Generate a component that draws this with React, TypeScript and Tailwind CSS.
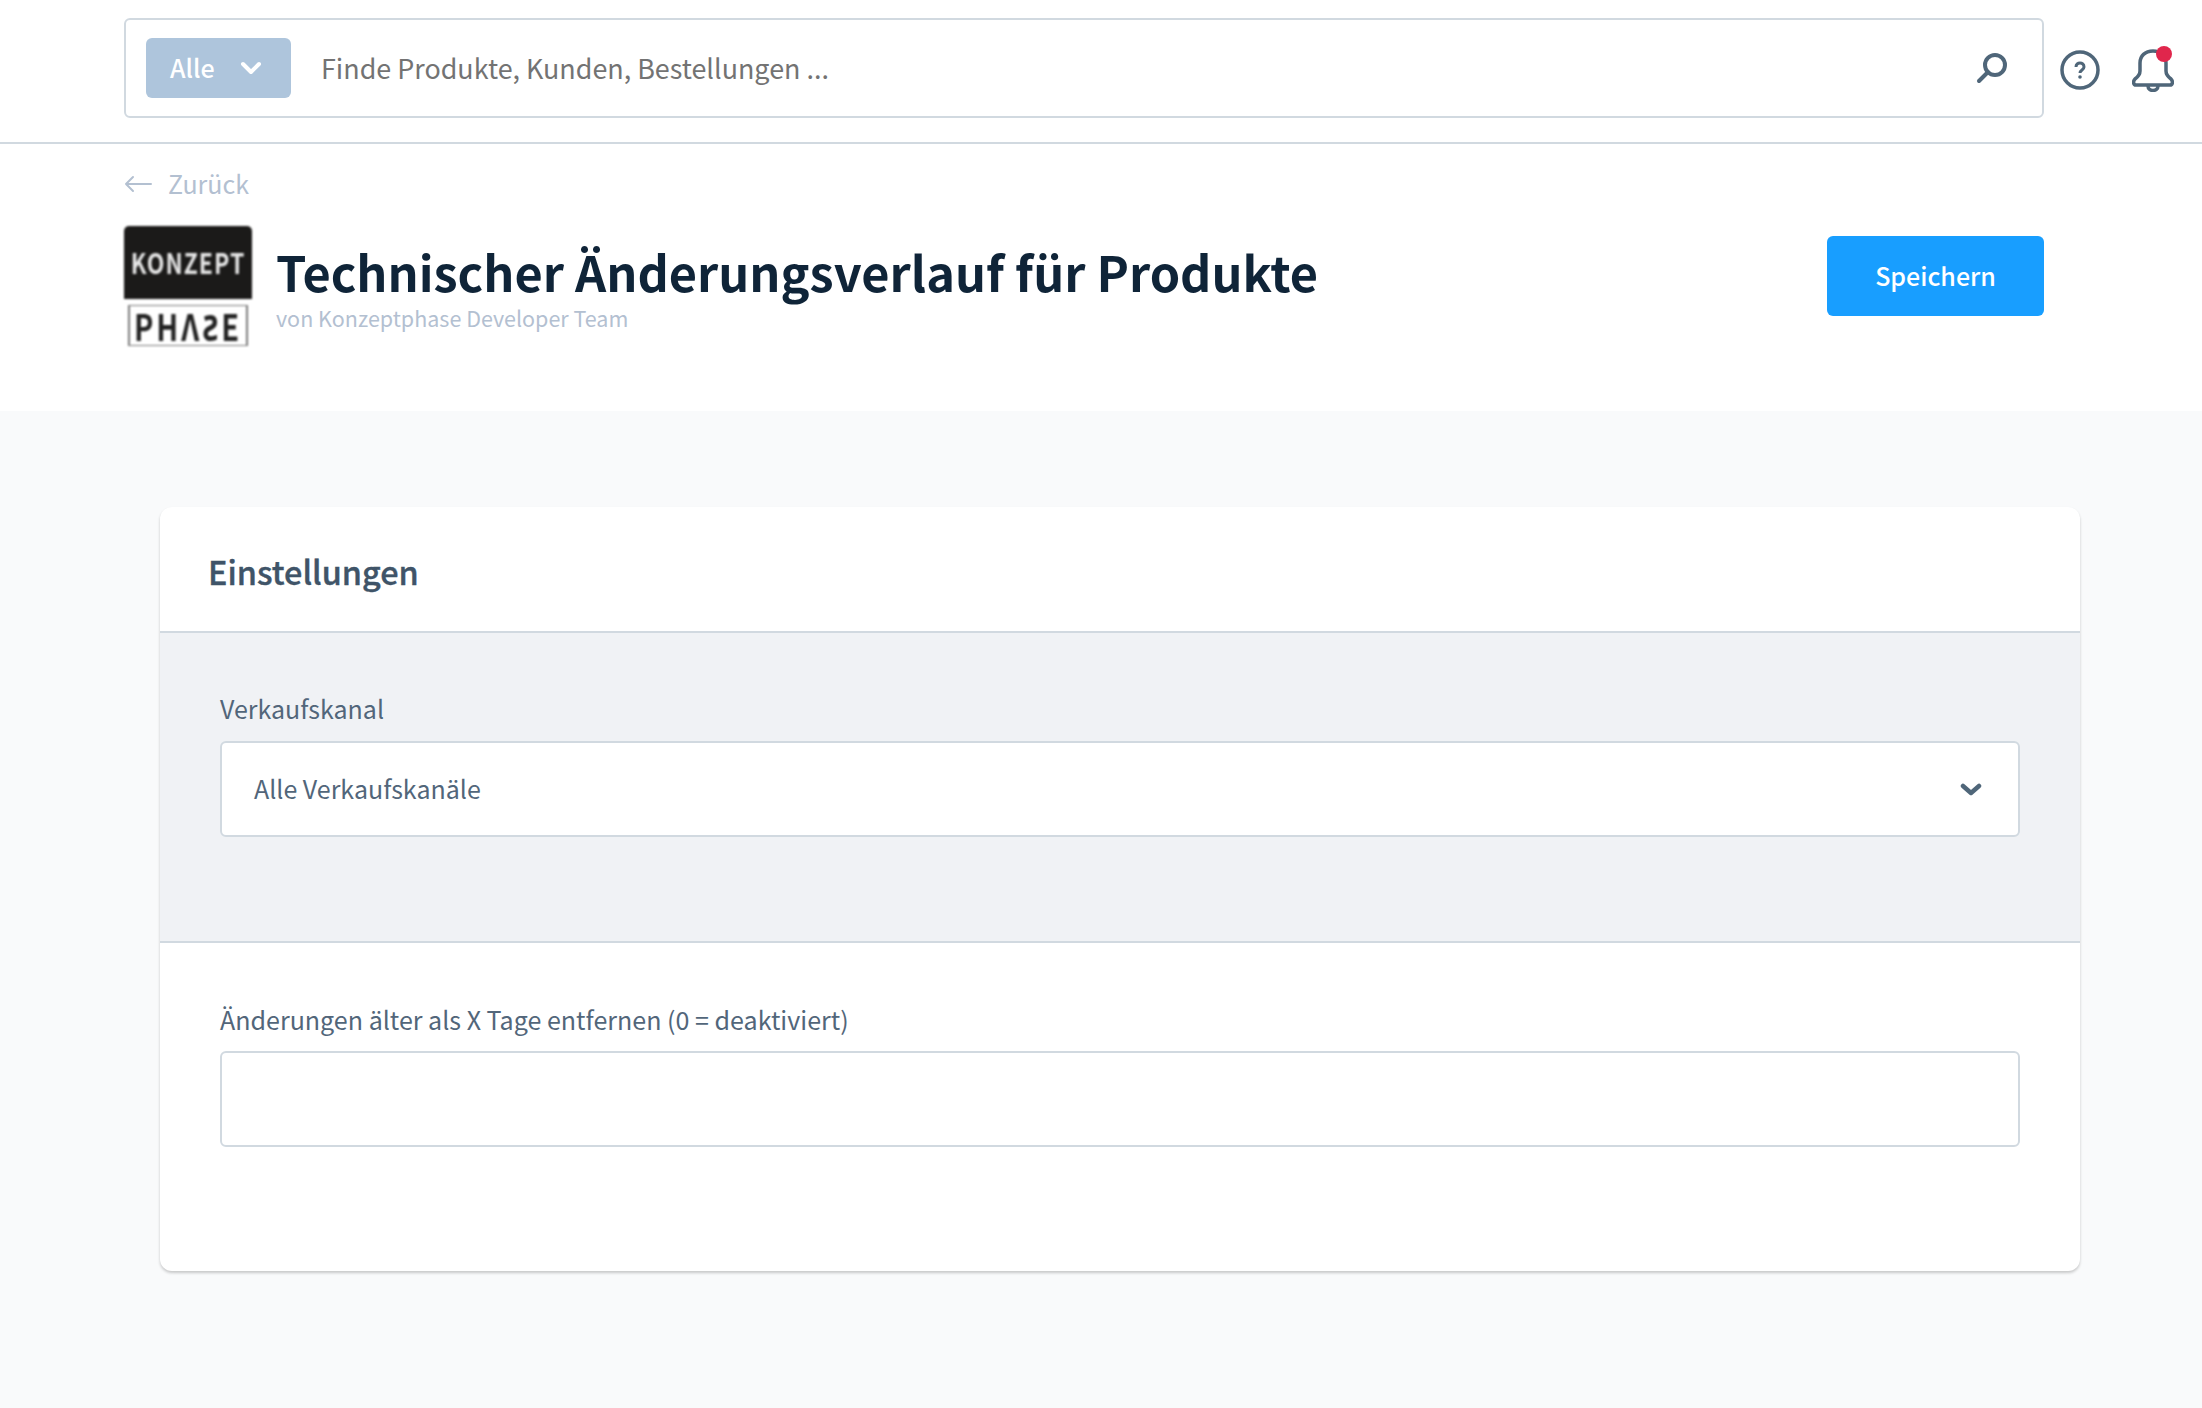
export default function App() {
  return (
    <div className="min-h-[1408px] bg-[#f9fafb] font-['Noto_Sans_CJK_SC','Source_Sans_Pro','Noto_Sans',sans-serif] text-[#3d4c5c]">
      <header className="flex h-[144px] items-start border-b-2 border-[#d1d9e0] bg-white pl-[124px] pr-[28px] pt-[18px]">
        <div className="flex h-[100px] w-[1920px] shrink-0 items-center rounded-[6px] border-2 border-[#d1d9e0] pl-[20px] pr-[34px]">
          <div className="flex h-[60px] w-[145px] items-center rounded-[6px] bg-[#aec5dc] pl-[24px] text-[25px] font-medium text-white">
            <span>Alle</span>
            <svg className="ml-[25px]" width="22" height="14" viewBox="0 0 22 14" fill="none" stroke="currentColor" strokeWidth="4" strokeLinecap="round" strokeLinejoin="round"><path d="M3 3l8 8 8-8" /></svg>
          </div>
          <span className="ml-[30px] text-[26.9px] text-[#737373]">Finde Produkte, Kunden, Bestellungen ...</span>
          <svg className="ml-auto" width="32" height="32" viewBox="0 0 32 32" fill="none" stroke="#4f6679" strokeWidth="4" strokeLinecap="round"><circle cx="19" cy="13" r="10" /><path d="M12 20L3 29" /></svg>
        </div>
        <svg className="ml-[16px] mt-[32px]" width="40" height="40" viewBox="0 0 40 40" fill="none" stroke="#4f6679" strokeWidth="3.500"><circle cx="20" cy="20" r="18" /><path d="M16 17c0-5.500 8-5.500 8 0 0 3-4 3-4 6" strokeWidth="3" /><circle cx="20" cy="27" r="1.800" fill="#4f6679" stroke="none" /></svg>
        <div className="relative ml-[32px] mt-[28px] h-[46px] w-[42px]">
          <svg width="42" height="44" viewBox="0 0 42 44" fill="none" stroke="#4f6679" strokeWidth="3.500" strokeLinejoin="round" className="mt-[2px]"><path d="M21 3c-8 0-13 5-13 12v8c0 3-1 5-5 8-2 2-2 6 1 6h34c3 0 3-4 1-6-4-3-5-5-5-8v-8c0-7-5-12-13-12z" /><path d="M16 38c0 6 10 6 10 0" /></svg>
          <span className="absolute right-[2px] top-0 h-[16px] w-[16px] rounded-full bg-[#e0264c]" />
        </div>
      </header>

      <section className="h-[267px] bg-white pl-[124px] pr-[158px]">
        <div className="flex h-[82px] items-center pb-[2px] text-[25px] text-[#b3c0d1]">
          <svg width="28" height="18" viewBox="0 0 28 18" fill="none" stroke="currentColor" strokeWidth="2" strokeLinecap="round" strokeLinejoin="round"><path d="M27 9H2M9 2L2 9l7 7" /></svg>
          <span className="ml-[16px]">Zurück</span>
        </div>
        <div className="flex items-start">
          <div className="h-[125px] w-[128px] shrink-0">
            <div className="flex h-[73px] items-center justify-center rounded-t-[5px] bg-[#1b1a19] text-[23px] font-bold tracking-[1px] text-[#e5e5e5] blur-[1px]"><span className="scale-y-125">KONZEPT</span></div>
            <div className="mx-[4px] mt-[6px] flex h-[41px] items-center justify-center border-x-2 border-y border-[#7a7a7a] bg-white text-[29px] font-bold leading-none tracking-[3px] text-[#222222] blur-[1px]"><span className="scale-y-125">PHΛƧE</span></div>
          </div>
          <div className="ml-[24px] flex-1 pt-[14px]">
            <h1 className="text-[48.7px] font-bold leading-[62px] text-[#0f2438]">Technischer Änderungsverlauf für Produkte</h1>
            <p className="pt-[1px] text-[21.5px] leading-[30px] text-[#b3c0d1]">von Konzeptphase Developer Team</p>
          </div>
          <button className="mt-[10px] h-[80px] w-[217px] shrink-0 rounded-[6px] bg-[#189eff] text-[25px] font-medium text-white">Speichern</button>
        </div>
      </section>

      <main className="px-[160px] pt-[96px]">
        <div className="w-[1920px] overflow-hidden rounded-[12px] bg-white shadow-[0_2px_3px_rgba(0,0,0,0.2)]">
          <div className="flex h-[126px] items-center border-b-2 border-[#d1d9e0] px-[48px] pt-[5px] text-[32.4px] font-medium text-[#3f5468] [-webkit-text-stroke:0.4px]">Einstellungen</div>
          <div className="h-[310px] border-b-2 border-[#d1d9e0] bg-[#f0f2f5] px-[60px] pt-[55px]">
            <label className="block text-[25px] leading-[40px] text-[#52667a]">Verkaufskanal</label>
            <div className="mt-[13px] flex h-[96px] items-center justify-between rounded-[6px] border-2 border-[#d1d9e0] bg-white pl-[32px] pr-[36px] text-[25px] text-[#52667a]">
              <span>Alle Verkaufskanäle</span>
              <svg width="22" height="13" viewBox="0 0 22 13" fill="none" stroke="#4f6679" strokeWidth="4.500" strokeLinecap="round" strokeLinejoin="round"><path d="M3 3l8 7 8-7" /></svg>
            </div>
          </div>
          <div className="h-[328px] px-[60px] pt-[56px]">
            <label className="block text-[25.05px] leading-[40px] text-[#52667a]">Änderungen älter als X Tage entfernen (0 = deaktiviert)</label>
            <div className="mt-[12px] h-[96px] rounded-[6px] border-2 border-[#d1d9e0] bg-white" />
          </div>
        </div>
      </main>
    </div>
  );
}
